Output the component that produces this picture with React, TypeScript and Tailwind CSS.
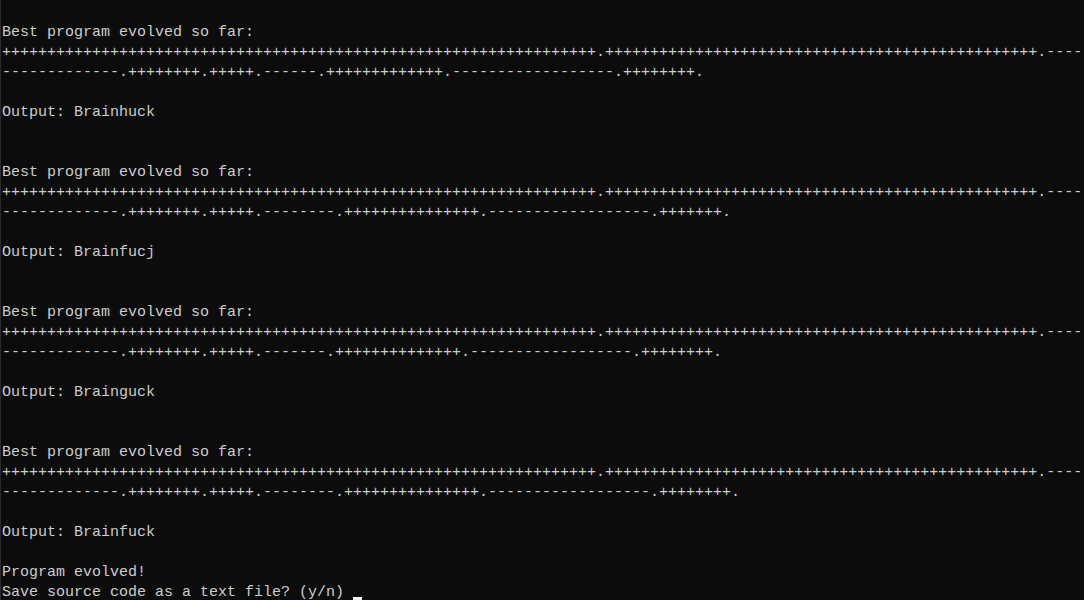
import * as React from 'react';

const p = (n: number) => '+'.repeat(n);
const m = (n: number) => '-'.repeat(n);

// first wrapped row is identical for every run: "Br" then 4 dashes of the 'a' step
const head = `${p(66)}.${p(48)}.${m(4)}`;

const runs = [
  { tail: `${m(13)}.${p(8)}.${p(5)}.${m(6)}.${p(13)}.${m(18)}.${p(8)}.`, output: 'Brainhuck' },
  { tail: `${m(13)}.${p(8)}.${p(5)}.${m(8)}.${p(15)}.${m(18)}.${p(7)}.`, output: 'Brainfucj' },
  { tail: `${m(13)}.${p(8)}.${p(5)}.${m(7)}.${p(14)}.${m(18)}.${p(8)}.`, output: 'Brainguck' },
  { tail: `${m(13)}.${p(8)}.${p(5)}.${m(8)}.${p(15)}.${m(18)}.${p(8)}.`, output: 'Brainfuck' },
];

const Line = ({ children }: { children?: React.ReactNode }) => (
  <div className="h-[20px] leading-[20px] whitespace-pre">{children ?? ' '}</div>
);

export default function App() {
  return (
    <div
      className="h-[600px] w-[1084px] overflow-hidden bg-[#0c0c0c] pt-[3px] pl-[1px] text-[15px] text-[#cccccc] border-l border-[#2b2b2b]"
      style={{ fontFamily: '"Liberation Mono", "DejaVu Sans Mono", monospace' }}
    >
      <Line />
      {runs.map((run, i) => (
        <React.Fragment key={i}>
          <Line>Best program evolved so far:</Line>
          <Line>{head}</Line>
          <Line>{run.tail}</Line>
          <Line />
          <Line>Output: {run.output}</Line>
          {i < runs.length - 1 && (
            <>
              <Line />
              <Line />
            </>
          )}
        </React.Fragment>
      ))}
      <Line />
      <Line>Program evolved!</Line>
      <div className="flex h-[20px] leading-[20px] whitespace-pre">
        <span>Save source code as a text file? (y/n) </span>
        <span className="mt-[14px] h-[4px] w-[9px] bg-[#f2f2f2]" />
      </div>
    </div>
  );
}
